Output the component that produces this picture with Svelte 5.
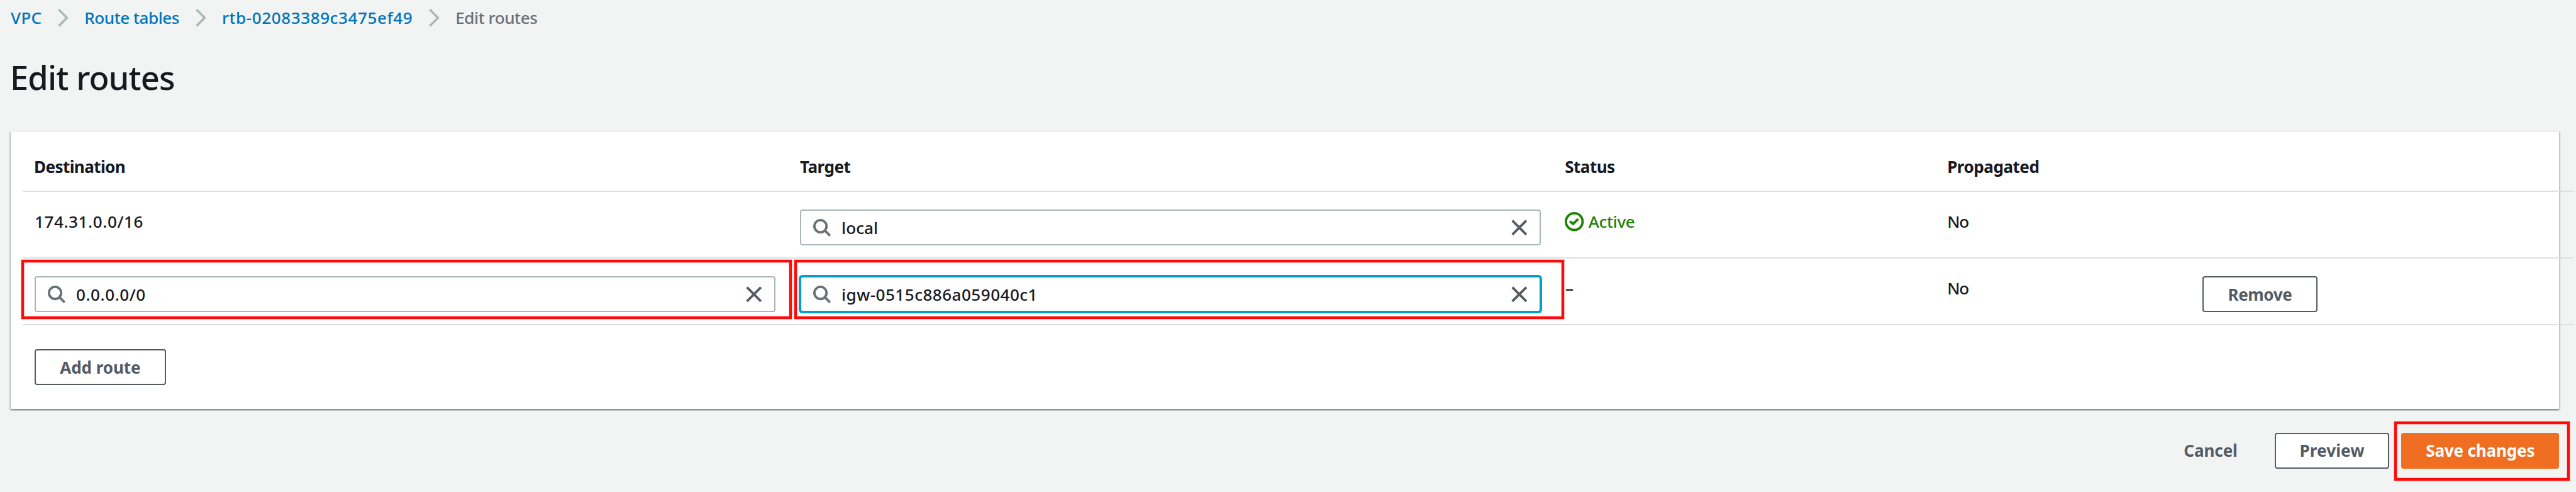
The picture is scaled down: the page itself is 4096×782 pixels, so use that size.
<script>
  const crumbs = [
    { text: 'VPC', ls: 0.3 },
    { text: 'Route tables', ls: -0.49 },
    { text: 'rtb-02083389c3475ef49', ls: 0.6 },
    { text: 'Edit routes', ls: -0.45 }
  ];
  const heads = [
    { text: 'Destination', ls: -0.65 },
    { text: 'Target', ls: -0.54 },
    { text: 'Status', ls: -0.6 },
    { text: 'Propagated', ls: -0.52 }
  ];
  const track = (v) => `letter-spacing:${v / 100}rem`;
</script>

{#snippet field(value, ls, focused)}
  <div class="field" class:focused>
    <svg class="search" viewBox="0 0 30 30"><circle cx="12.2" cy="12.2" r="10.2" /><path d="M19.3 19.2L28.2 28" /></svg>
    <span class="value" style={track(ls)}>{value}</span>
    <svg class="clear" viewBox="0 0 27 27"><path d="M1.8 1.8L25.2 25.2M25.2 1.8L1.8 25.2" /></svg>
  </div>
{/snippet}

<div class="page">
  <nav class="crumbs">
    {#each crumbs as c, i}
      {#if i > 0}
        <svg class="chev" viewBox="0 0 18 30"><path d="M1.6 1.3L15.2 15L1.6 28.7" /></svg>
      {/if}
      <span class="crumb" class:current={i === crumbs.length - 1} style={track(c.ls)}>{c.text}</span>
    {/each}
  </nav>
  <h1>Edit routes</h1>

  <section class="card">
    <div class="table">
      <div class="row head">
        {#each heads as h}
          <div class="th" style={track(h.ls)}>{h.text}</div>
        {/each}
      </div>
      <div class="row">
        <div class="text" style={track(0.6)}>174.31.0.0/16</div>
        {@render field('local', 0.07, false)}
        <div class="text status">
          <svg class="ok" viewBox="0 0 32 32"><circle cx="16" cy="16" r="14" /><path d="M8.6 15.4L14 19.9L22.5 11.7" /></svg>
          <span style={track(-0.34)}>Active</span>
        </div>
        <div class="text" style={track(-1.3)}>No</div>
      </div>
      <div class="row">
        {@render field('0.0.0.0/0', 0.57, false)}
        {@render field('igw-0515c886a059040c1', 0.5, true)}
        <div class="text">–</div>
        <div class="text" style={track(-1.3)}>No</div>
        <button class="btn remove" style={track(-0.44)}>Remove</button>
      </div>
    </div>
    <button class="btn add" style={track(-0.1)}>Add route</button>
  </section>

  <footer>
    <button class="btn link" style={track(-0.1)}>Cancel</button>
    <button class="btn preview" style={track(0.1)}>Preview</button>
    <button class="btn primary" style={track(-0.2)}>Save changes</button>
  </footer>

  <div class="mark mark-destination"></div>
  <div class="mark mark-target"></div>
  <div class="mark mark-save"></div>
</div>

<style>
  :global(html) { font-size: 94.8587px; }
  :global(body) { margin: 0; background: #f2f3f3; overflow: hidden; }
  .page {
    position: relative;
    box-sizing: border-box;
    width: 4096px;
    height: 782px;
    overflow: hidden;
    padding: 0.073rem 0.28rem 0 0.18rem;
    background: #f2f3f3;
    color: #16191f;
    font-family: "Noto Sans", "Open Sans", sans-serif;
    font-size: 0.275rem;
    font-weight: 500;
    line-height: 0.44rem;
    white-space: nowrap;
  }
  svg { display: block; flex: none; fill: none; overflow: visible; }
  .crumbs { display: flex; align-items: center; height: 0.44rem; }
  .crumb { padding-top: 2px; color: #0073bb; }
  .crumb.current { color: #687078; }
  .chev {
    width: 0.18rem;
    height: 0.3rem;
    margin: 0 0.262rem 0 0.274rem;
    stroke: #aab7b8;
    stroke-width: 3.7;
  }
  h1 {
    margin: 0.422rem 0 0 -0.012rem;
    font-size: 0.553rem;
    font-weight: 500;
    line-height: 0.72rem;
    letter-spacing: -0.0092rem;
  }
  .card {
    box-sizing: border-box;
    height: 4.66rem;
    margin-top: 0.535rem;
    border-top: 2px solid #eaeded;
    background: #fff;
    box-shadow: 0 2px 2px 0 rgba(0, 28, 36, 0.3), 2px 2px 2px 0 rgba(0, 28, 36, 0.15), -2px 2px 2px 0 rgba(0, 28, 36, 0.15);
  }
  .table { width: 42.76rem; margin-left: 0.2rem; }
  .row {
    display: grid;
    grid-template-columns: 12.83rem 12.83rem 6.4rem 4.28rem 1fr;
    align-items: start;
    box-sizing: border-box;
    height: 1.12rem;
    padding-left: 0.2rem;
    border-bottom: 2px solid #dedfdf;
  }
  .row.head { height: 1rem; }
  .th { padding-top: 0.376rem; font-weight: 700; }
  .th:first-child { margin-left: -0.01rem; }
  .th:nth-child(3) { margin-left: -0.008rem; }
  .text { padding-top: 0.292rem; }
  .status { display: flex; align-items: center; gap: 0.075rem; color: #1d8102; }
  .ok { width: 0.32rem; height: 0.32rem; margin: -0.015rem 0 0 -0.008rem; stroke: #1d8102; stroke-width: 4; }
  .field {
    display: flex;
    align-items: center;
    box-sizing: border-box;
    width: 12.423rem;
    height: 0.6rem;
    margin-top: 0.3rem;
    padding: 0 0.208rem 0 0.2rem;
    border: 2px solid #aab7b8;
    border-radius: 4px;
    background: #fff;
  }
  .field.focused { border-color: #00a1c9; box-shadow: 0 0 0 2px #00a1c9; }
  .search { width: 0.3rem; height: 0.3rem; margin-top: 0.02rem; stroke: #687078; stroke-width: 4; }
  .value { flex: 1; margin-left: 0.175rem; padding-top: 2px; }
  .clear { width: 0.27rem; height: 0.27rem; stroke: #545b64; stroke-width: 4; }
  .btn {
    display: flex;
    align-items: center;
    justify-content: center;
    box-sizing: border-box;
    height: 0.6rem;
    margin: 0;
    padding: 2px 0 0;
    border: 2px solid #545b64;
    border-radius: 4px;
    background: #fff;
    color: #545b64;
    font: inherit;
    font-weight: 700;
  }
  .remove { width: 1.924rem; margin-top: 0.3rem; }
  .add { width: 2.2rem; margin: 0.4rem 0 0 0.4rem; }
  footer { display: flex; justify-content: flex-end; gap: 0.2rem; margin-top: 0.4rem; }
  .link { width: 1.75rem; border-color: transparent; background: transparent; }
  .preview { width: 1.92rem; }
  .primary { width: 2.65rem; border-color: #f06e21; background: #f06e21; color: #fff; }
  .mark {
    position: absolute;
    box-sizing: border-box;
    border: 4px solid #ff0a0a;
    box-shadow: 0 0 0 0.7px rgba(255, 10, 10, 0.4), inset 0 0 0 0.7px rgba(255, 10, 10, 0.4);
  }
  .mark-destination { left: 0.362rem; top: 4.358rem; width: 12.91rem; height: 0.992rem; }
  .mark-target { left: 13.312rem; top: 4.358rem; width: 12.91rem; height: 0.992rem; }
  .mark-save { left: 40.132rem; top: 7.058rem; width: 2.944rem; height: 0.992rem; }
</style>
